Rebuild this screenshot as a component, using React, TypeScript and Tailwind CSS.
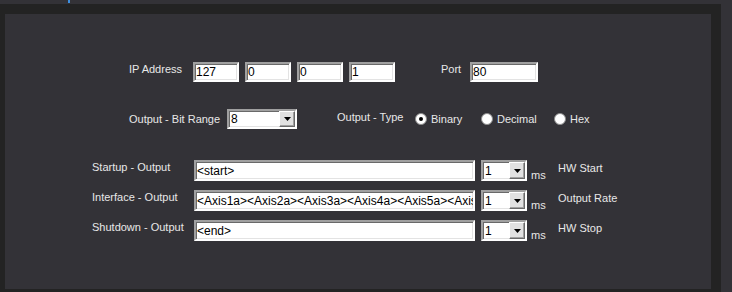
import React from "react";

const font = "font-['Liberation_Sans',Arial,sans-serif]";

function TextBox({ value, width }: { value: string; width: string }) {
  return (
    <div
      className={`${width} h-[20px] flex items-center overflow-hidden whitespace-nowrap bg-white border-2 border-t-[#a0a0a0] border-l-[#a0a0a0] border-b-white border-r-white shadow-[inset_1px_1px_0_#696969,inset_-1px_-1px_0_#e3e3e3] pl-[1px] text-[12px] leading-[14px] text-black`}
    >
      {value}
    </div>
  );
}

function Combo({ value, width, height }: { value: string; width: string; height: string }) {
  return (
    <div
      className={`${width} ${height} flex bg-white border-2 border-t-[#a0a0a0] border-l-[#a0a0a0] border-b-white border-r-white shadow-[inset_1px_1px_0_#696969,inset_-1px_-1px_0_#e3e3e3]`}
    >
      <div className="flex-1 flex items-center pl-[2px] text-[12px] leading-[14px] text-black">{value}</div>
      <div className="w-[16px] flex items-center justify-center bg-[#e1e1e1] border border-t-white border-l-white border-b-[#696969] border-r-[#696969] shadow-[inset_-1px_-1px_0_#a0a0a0]">
        <svg width="7" height="4" viewBox="0 0 7 4">
          <path d="M0 0h7L3.5 4z" fill="#000" />
        </svg>
      </div>
    </div>
  );
}

function Radio({ label, checked, width }: { label: string; checked?: boolean; width: string }) {
  return (
    <div className={`${width} flex items-start`}>
      <div className="mt-[4px] w-[12px] h-[12px] rounded-full bg-white border border-[#8c8c8c] flex items-center justify-center">
        {checked && <div className="w-[4px] h-[4px] rounded-full bg-black" />}
      </div>
      <span className="ml-[4px] mt-[4px]">{label}</span>
    </div>
  );
}

const outputs = [
  { label: "Startup - Output", value: "<start>", hw: "HW Start" },
  {
    label: "Interface - Output",
    value: "<Axis1a><Axis2a><Axis3a><Axis4a><Axis5a><Axis6a>",
    hw: "Output Rate",
  },
  { label: "Shutdown - Output", value: "<end>", hw: "HW Stop" },
];

export default function App() {
  return (
    <div className={`w-[732px] h-[292px] flex flex-col bg-[#333237] ${font} text-[11px] leading-[13px] text-[#e8e8e8]`}>
      <div className="h-[4px] flex">
        <div className="ml-[68px] w-[2px] h-[3px] bg-[#3d8fe0]" />
      </div>
      <div className="flex-1 flex">
        <div className="w-[721px] bg-[#232323] pt-[10px] pl-[5px] pr-[10px] pb-[3px] flex">
          <div className="flex-1 bg-[#333237] flex flex-col">
            {/* IP / Port */}
            <div className="mt-[48px] ml-[124px] flex items-start">
              <span className="w-[64px] mt-[1px]">IP Address</span>
              <div className="flex gap-[6px]">
                <TextBox value="127" width="w-[46px]" />
                <TextBox value="0" width="w-[46px]" />
                <TextBox value="0" width="w-[46px]" />
                <TextBox value="1" width="w-[46px]" />
              </div>
              <span className="ml-[46px] w-[29px] mt-[1px]">Port</span>
              <TextBox value="80" width="w-[68px]" />
            </div>

            {/* Bit range / Type */}
            <div className="mt-[27px] ml-[124px] flex items-start">
              <span className="w-[98px] mt-[4px]">Output - Bit Range</span>
              <Combo value="8" width="w-[70px]" height="h-[20px]" />
              <span className="ml-[40px] w-[78px] mt-[2px]">Output - Type</span>
              <Radio label="Binary" checked width="w-[66px]" />
              <Radio label="Decimal" width="w-[73px]" />
              <Radio label="Hex" width="w-[50px]" />
            </div>

            {/* Outputs */}
            <div className="mt-[31px] ml-[87px] flex flex-col gap-[8px]">
              {outputs.map((o) => (
                <div key={o.label} className="flex items-start">
                  <span className="w-[102px] mt-[1px]">{o.label}</span>
                  <TextBox value={o.value} width="w-[281px] !h-[21px]" />
                  <div className="ml-[6px]">
                    <Combo value="1" width="w-[46px]" height="h-[21px]" />
                  </div>
                  <span className="ml-[4px] w-[27px] mt-[9px]">ms</span>
                  <span className="mt-[2px]">{o.hw}</span>
                </div>
              ))}
            </div>
          </div>
        </div>
      </div>
    </div>
  );
}
